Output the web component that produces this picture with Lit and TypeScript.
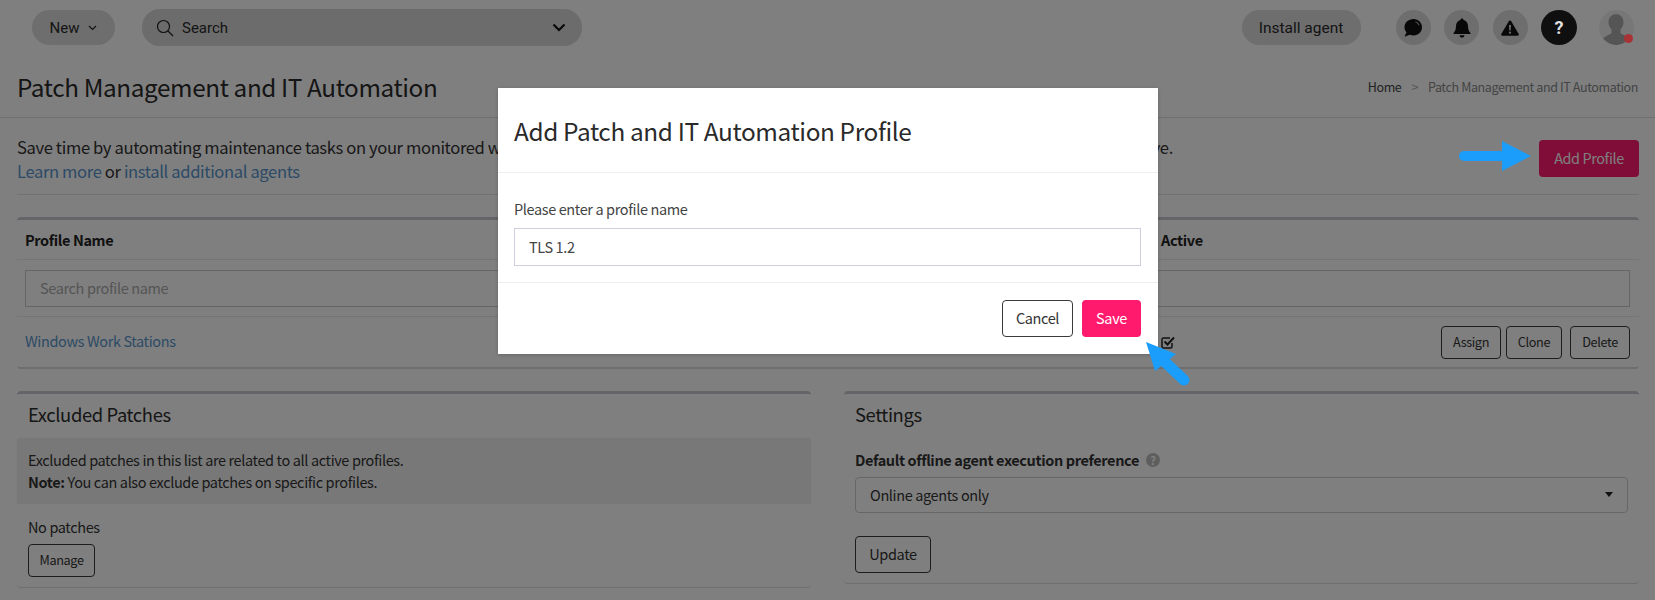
import { LitElement, html, css } from "lit";
import { customElement } from "lit/decorators.js";

@customElement("app-root")
export class AppRoot extends LitElement {
  static styles = css`
    :host { display: block; height: 600px; width: 1655px; position: relative; overflow: hidden; background: #fff;
      font-family: "Noto Sans CJK SC", "Source Sans Pro", sans-serif; color: #222; font-size: 14.5px; letter-spacing: -0.026em; }
    * { box-sizing: border-box; }
    a { color: #5a96cc; text-decoration: none; }
    .topbar { height: 55px; display: flex; align-items: center; padding: 0 21px 0 32px; font-family: Roboto, sans-serif; letter-spacing: 0; }
    .pill { background: #dcdcdc; border-radius: 18px; height: 35px; display: flex; align-items: center; }
    .new { width: 83px; justify-content: center; gap: 9px; font-size: 15px; margin-right: 27px; color: #2a2a2a; }
    .search { width: 440px; height: 37px; background: #d8d8d8; padding: 0 16px 0 14px; gap: 8px; font-size: 15px; color: #2a2a2a; }
    .search span { flex: 1; }
    .install { width: 119px; justify-content: center; font-size: 15.5px; margin-left: auto; margin-right: 35px; color: #2a2a2a; }
    .ico { width: 35px; height: 35px; border-radius: 50%; background: #dcdcdc; display: flex; align-items: center; justify-content: center; margin-right: 13.5px; flex: none; }
    .ico.help { background: #0f0f0f; width: 36px; margin-right: 22px; color: #e0e0e0; font: 700 18px Roboto, sans-serif; position: relative; z-index: 2; }
    .avatar { width: 35px; height: 35px; border-radius: 50%; background: #efefef; position: relative; flex: none; }
    .avatar svg { display: block; border-radius: 50%; }
    .dot { position: absolute; right: 1px; bottom: 2px; width: 9px; height: 9px; border-radius: 50%; background: #a83236; z-index: 2; }

    .head { height: 63px; border-bottom: 1px solid #dedede; display: flex; align-items: center; justify-content: space-between; padding: 0 17px 0; }
    h1 { font-size: 24.3px; font-weight: 400; margin: 0; color: #2a2a2a; }
    .crumb { font-size: 12.5px; color: #888; display: flex; gap: 10px; }
    .crumb b { font-weight: 400; color: #444; }
    .crumb i { font-style: normal; color: #aaa; }
    .info { margin: 0 16px 0 17px; height: 77px; border-bottom: 1px solid #e4e4e4; padding-top: 17px; display: flex; justify-content: space-between; align-items: flex-start; }
    .info p { margin: 0; font-size: 16.6px; line-height: 24px; white-space: nowrap; color: #333; }
    .primary { background: #ff1a6e; color: #fff; border: 0; border-radius: 4px; font: inherit; display: flex; align-items: center; justify-content: center; padding-bottom: 2px; }
    .add { width: 100px; height: 37px; margin-top: 5px; font-size: 14.4px; }

    .card { border-top: 3px solid #cbcbd2; border-radius: 4px; border-bottom: 1px solid #ddd; }
    .table { margin: 22px 16px 22px 17px; height: 152px; border-bottom-width: 2px; }
    .row { display: grid; grid-template-columns: 1144px 1fr; border-bottom: 1px solid #eaeaea; }
    .row:last-child { border-bottom: 0; }
    .hrow { height: 40px; align-items: center; font-weight: 700; }
    .hrow div:first-child { padding-left: 8px; }
    .srow { height: 57px; padding: 10px 9px 0 8px; display: block; }
    .sinput { height: 37px; border: 1px solid #ccc; color: #aaa; padding: 0 0 2px 14px; display: flex; align-items: center; }
    .drow { height: 51px; align-items: center; }
    .drow > div:first-child { padding: 0 0 4px 8px; }
    .actions { display: flex; align-items: center; justify-content: space-between; padding-right: 9px; }
    .btns { display: flex; gap: 5px; }
    .btn { border: 1px solid #3a3a3a; border-radius: 4px; background: transparent; display: flex; align-items: center; justify-content: center; color: #333; font: inherit; padding-bottom: 2px; }
    .sm { height: 33px; font-size: 12.7px; }
    .cols { margin: 0 16px 0 17px; display: grid; grid-template-columns: 794px 795px; gap: 33px; align-items: start; }
    h2 { font-size: 18.4px; font-weight: 400; margin: 0; color: #2c2c2c; line-height: 40px; height: 44px; }
    .left { height: 197px; }
    .left h2 { padding-left: 11px; }
    .note { background: #f1f1f1; height: 66px; padding: 11px 11px; line-height: 22px; color: #333; }
    .np { padding: 12px 11px 0; line-height: 22px; color: #333; }
    .manage { width: 67px; margin: 6px 0 0 11px; }
    .right { height: 193px; padding: 0 11px; }
    .lbl { font-weight: 700; margin-top: 11px; line-height: 22px; display: flex; align-items: center; gap: 7px; color: #333; }
    .q { width: 14px; height: 14px; border-radius: 50%; background: #bdbdbd; color: #fff; font-size: 11px; display: flex; align-items: center; justify-content: center; }
    .sel { height: 36px; margin-top: 6px; border: 1px solid #cfcfcf; border-radius: 4px; padding: 0 14px 2px; display: flex; align-items: center; justify-content: space-between; color: #333; background: #fff; }
    .caret { width: 0; height: 0; border: 4px solid transparent; border-top: 5px solid #222; border-bottom: 0; }
    .update { width: 76px; height: 37px; margin-top: 23px; }

    .overlay { position: absolute; inset: 0; z-index: 1; background: rgba(0,0,0,.5); display: flex; justify-content: center; align-items: flex-start; }
    .modal { width: 660px; height: 266px; margin: 88px 0 0 1px; background: #fff; box-shadow: 0 1px 4px rgba(0,0,0,.2); display: flex; flex-direction: column; }
    .mh { height: 85px; border-bottom: 1px solid #eee; padding: 0 16px; display: flex; align-items: center; }
    .mh h3 { font-size: 24.4px; font-weight: 400; margin: 0; color: #2a2a2a; }
    .mb { height: 110px; border-bottom: 1px solid #eee; padding: 25px 17px 0 16px; }
    .mb label { display: block; line-height: 22px; color: #444; font-size: 14.5px; }
    .input { height: 38px; margin-top: 8px; border: 1px solid #cdd0dc; padding: 0 0 2px 14px; display: flex; align-items: center; color: #444; }
    .mf { padding: 17px 17px 0 0; display: flex; justify-content: flex-end; gap: 9px; }
    .mf .btn { width: 71px; height: 37px; }
    .mf .primary { width: 59px; height: 37px; }
    .arrows { position: absolute; inset: 0; z-index: 3; pointer-events: none; }
  `;

  render() {
    return html`
      <div class="topbar">
        <div class="pill new">New
          <svg width="9" height="6" viewBox="0 0 9 6"><path d="M1 1l3.5 3.5L8 1" fill="none" stroke="#222" stroke-width="1.2"/></svg>
        </div>
        <div class="pill search">
          <svg width="18" height="18" viewBox="0 0 18 18"><circle cx="7.5" cy="7.5" r="6" fill="none" stroke="#222" stroke-width="1.2"/><path d="M12 12l5 5" stroke="#222" stroke-width="1.2"/></svg>
          <span>Search</span>
          <svg width="14" height="9" viewBox="0 0 14 9"><path d="M1.5 1.5L7 7l5.5-5.5" fill="none" stroke="#111" stroke-width="2.2"/></svg>
        </div>
        <div class="pill install">Install agent</div>
        <div class="ico">
          <svg width="20" height="20" viewBox="0 0 20 20"><path d="M10.5 1C5.5 1 1.5 4.6 1.5 9.2c0 2 .7 3.7 2 5.1L1.5 18.8l5.3-2c1.1.5 2.4.7 3.7.7 5 0 8.5-3.6 8.5-8.2S15.5 1 10.5 1z" fill="#111"/><path d="M12.5 4c1.6.4 3 1.6 3.5 3.2" fill="none" stroke="#dcdcdc" stroke-width="1"/></svg>
        </div>
        <div class="ico">
          <svg width="18" height="20" viewBox="0 0 18 20"><path d="M9 0.5c-.9 0-1.500.6-1.500 1.400C4.600 2.600 3 5 3 8c0 3.600-1 5.300-2.500 7v1h17v-1C16 13.300 15 11.600 15 8c0-3-1.600-5.400-4.500-6.100C10.500 1.100 9.900.5 9 .5z" fill="#111"/><path d="M6.500 17.200h5a2.500 2.500 0 0 1-5 0z" fill="#111"/></svg>
        </div>
        <div class="ico">
          <svg width="18" height="16" viewBox="0 0 18 16"><path d="M9 .5c.5 0 .9.3 1.200.8l7.500 12.700c.4.800 0 1.700-1 1.700H1.300c-1 0-1.400-.9-1-1.700L7.800 1.300C8.100.8 8.500.5 9 .5z" fill="#111"/><path d="M8 5h2l-.3 5.500H8.300z" fill="#dcdcdc"/><circle cx="9" cy="12.700" r="1.100" fill="#dcdcdc"/></svg>
        </div>
        <div class="ico help">?</div>
        <div class="avatar">
          <svg width="35" height="35" viewBox="0 0 35 35"><path d="M18 4c-5 0-8.500 3.500-8.500 8 0 3 1.200 5.500 3 7.500v3.500c-1.500 1.800-6 2.500-8.500 5.500 3 4 8 6.500 13 6.500s9.500-2.500 13-6.500c-2.500-3-7-3.700-8.500-5.500v-3.500c1.800-2 3-4.500 3-7.500 0-4.500-3.500-8-8-8z" fill="#ababab"/></svg>
          <div class="dot"></div>
        </div>
      </div>
      <div class="head">
        <h1>Patch Management and IT Automation</h1>
        <div class="crumb"><b>Home</b><i>&gt;</i><span>Patch Management and IT Automation</span></div>
      </div>
      <div class="info">
        <p>Save time by automating maintenance tasks on your monitored workstations and servers. Set up a profile then assign it to the agents you'd like to keep active.<br><a>Learn more</a> or <a>install additional agents</a></p>
        <div class="primary add">Add Profile</div>
      </div>
      <div class="card table">
        <div class="row hrow"><div>Profile Name</div><div>Active</div></div>
        <div class="row srow"><div class="sinput">Search profile name</div></div>
        <div class="row drow">
          <div><a>Windows Work Stations</a></div>
          <div class="actions">
            <svg width="14" height="13" viewBox="0 0 14 13"><path d="M11 7v3.500a1.500 1.500 0 0 1-1.500 1.500h-7A1.500 1.500 0 0 1 1 10.500v-7A1.500 1.500 0 0 1 2.500 2H9" fill="none" stroke="#222" stroke-width="1.500"/><path d="M3.500 5.500l3 3L13 1.500" fill="none" stroke="#222" stroke-width="2"/></svg>
            <div class="btns">
              <div class="btn sm" style="width:60px">Assign</div>
              <div class="btn sm" style="width:56px">Clone</div>
              <div class="btn sm" style="width:60px;margin-left:3px">Delete</div>
            </div>
          </div>
        </div>
      </div>
      <div class="cols">
        <div class="card left">
          <h2>Excluded Patches</h2>
          <div class="note">Excluded patches in this list are related to all active profiles.<br><b>Note:</b> You can also exclude patches on specific profiles.</div>
          <div class="np">No patches</div>
          <div class="btn sm manage">Manage</div>
        </div>
        <div class="card right">
          <h2>Settings</h2>
          <div class="lbl">Default offline agent execution preference <span class="q">?</span></div>
          <div class="sel">Online agents only <span class="caret"></span></div>
          <div class="btn update">Update</div>
        </div>
      </div>
      <div class="overlay">
        <div class="modal">
          <div class="mh"><h3>Add Patch and IT Automation Profile</h3></div>
          <div class="mb">
            <label>Please enter a profile name</label>
            <div class="input">TLS 1.2</div>
          </div>
          <div class="mf">
            <div class="btn">Cancel</div>
            <div class="primary">Save</div>
          </div>
        </div>
      </div>
      <svg class="arrows" width="1655" height="600" viewBox="0 0 1655 600">
        <path d="M1464 156H1504" stroke="#1a9dfb" stroke-width="10" stroke-linecap="round"/>
        <path d="M1502 141L1531 156L1502 171z" fill="#1a9dfb"/>
        <path d="M1165 362L1184 380" stroke="#1a9dfb" stroke-width="11" stroke-linecap="round"/>
        <path d="M1146 342L1176 354L1155 371z" fill="#1a9dfb"/>
      </svg>
    `;
  }
}
